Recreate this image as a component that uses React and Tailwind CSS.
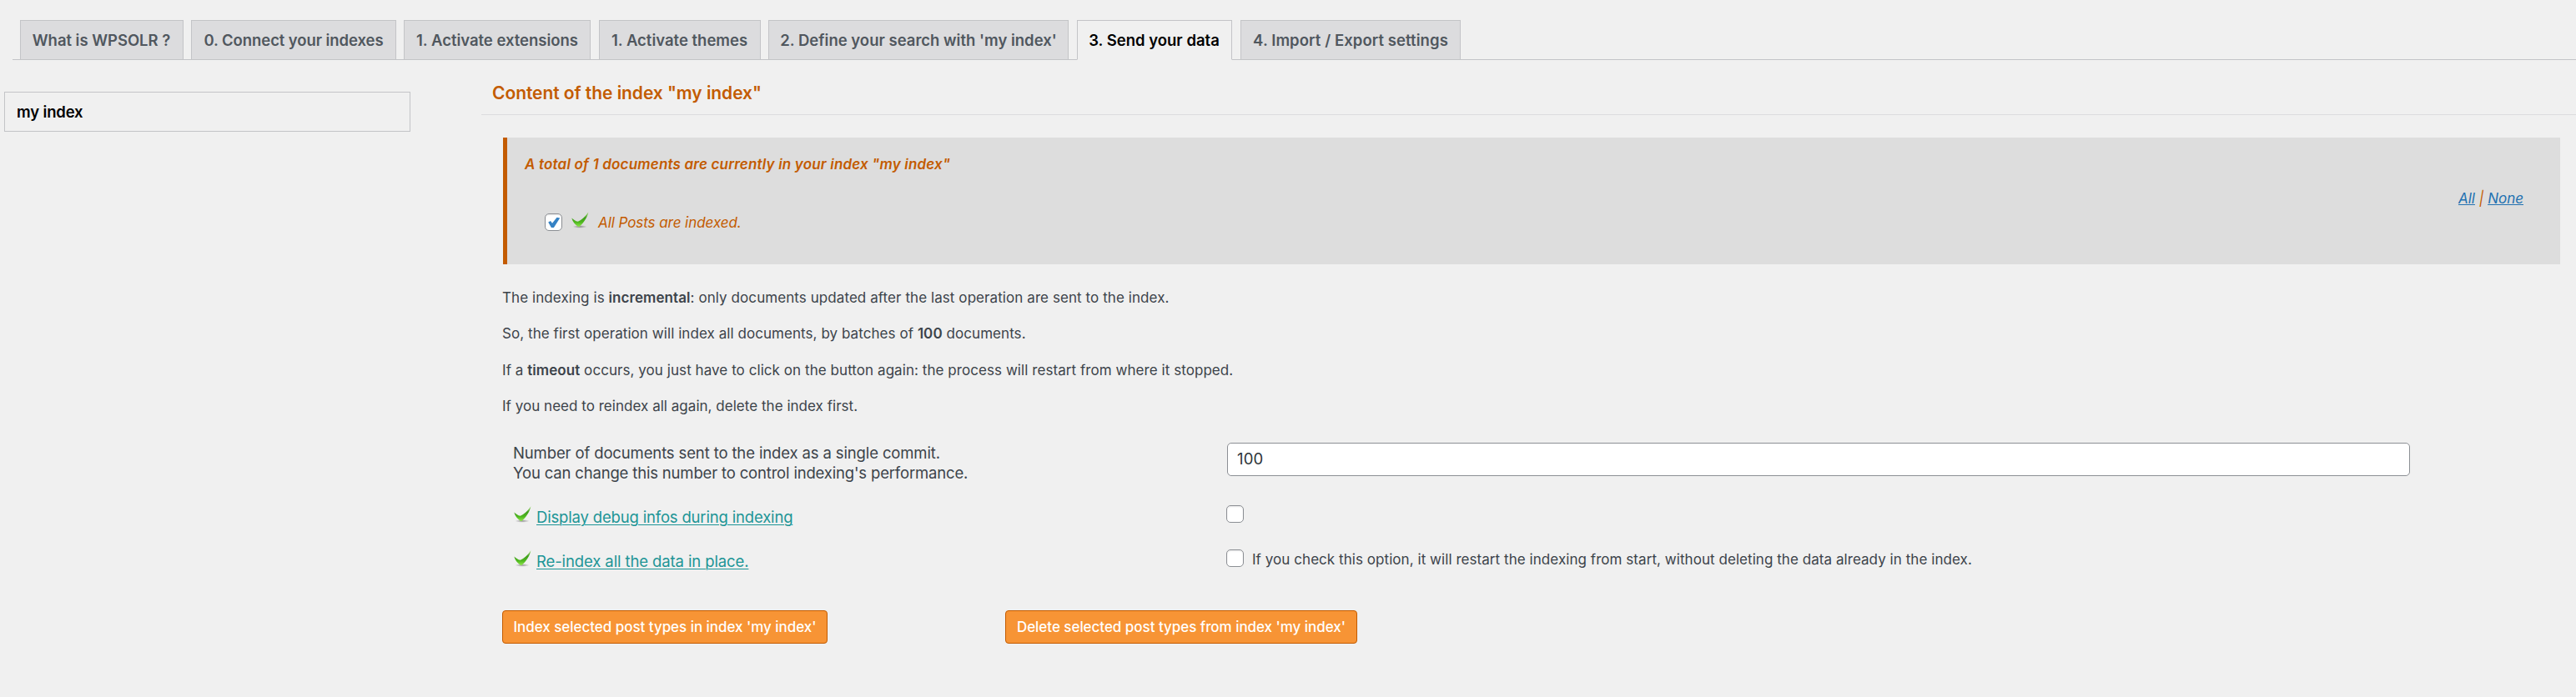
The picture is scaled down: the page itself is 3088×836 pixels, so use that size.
import { useId } from "react";

const TABS = [
  { label: "What is WPSOLR ?", box: "w-[196px] pr-[1px] tracking-[-0.03px]" },
  { label: "0. Connect your indexes", box: "w-[246px] ml-[9px] tracking-[-0.08px]" },
  { label: "1. Activate extensions", box: "w-[224px] ml-[9px] tracking-[-0.017px]" },
  { label: "1. Activate themes", box: "w-[194px] ml-[10px] pr-[1px]" },
  { label: "2. Define your search with 'my index'", box: "w-[360px] ml-[9px]" },
  { label: "3. Send your data", box: "w-[186px] ml-[10px] pr-[1px]", active: true },
  { label: "4. Import / Export settings", box: "w-[264px] ml-[10px] tracking-[0.069px]" },
];

function Tab({ label, box, active }) {
  const look = active
    ? "border-b border-b-[#f0f0f0] bg-[#f0f0f0] text-black -mb-px h-12"
    : "bg-[#dcdcde] text-[#50575e] h-[47px]";
  return (
    <a
      className={`block shrink-0 border-x border-t border-x-[#c3c4c7] border-t-[#c3c4c7] text-center text-[18.5px] leading-[46px] font-semibold whitespace-nowrap ${box} ${look}`}
    >
      {label}
    </a>
  );
}

function GreenTick() {
  const id = useId();
  return (
    <svg width="21" height="20" viewBox="0 0 21 20" className="shrink-0" aria-hidden="true">
      <defs>
        <linearGradient id={id} x1="0" y1="0" x2="0" y2="1">
          <stop offset="0" stopColor="#a5dc78" />
          <stop offset="0.4" stopColor="#3f9f1c" />
          <stop offset="0.7" stopColor="#4fb91f" />
          <stop offset="1" stopColor="#93e650" />
        </linearGradient>
        <radialGradient id={`${id}s`}>
          <stop offset="0" stopColor="#000" stopOpacity="0.4" />
          <stop offset="1" stopColor="#000" stopOpacity="0" />
        </radialGradient>
      </defs>
      <ellipse cx="10" cy="17.9" rx="8.5" ry="1.9" fill={`url(#${id}s)`} />
      <path
        d="M0.3 7.4 C2.2 9.2 4.8 11 7.8 11.8 C12 9.8 16.6 6 20.4 0.2 C19.2 6.4 15 13 9.6 17.8 C8.9 18.3 8 18.2 7.5 17.6 C4.6 15.2 1.4 12 0.3 7.4 Z"
        fill={`url(#${id})`}
      />
    </svg>
  );
}

function Checkbox({ checked }) {
  return (
    <span
      role="checkbox"
      aria-checked={!!checked}
      className="flex size-[21px] shrink-0 items-center justify-center rounded-[5px] border border-[#8c8f94] bg-white shadow-[inset_0_1px_2px_rgba(0,0,0,0.1)]"
    >
      {checked && (
        <svg width="19" height="19" viewBox="0 0 19 19" aria-hidden="true">
          <path d="M3.2 9.6 L6 8 L8 10.7 L13.6 3.8 L17.2 4.4 L9.9 16 L6.9 16.1 Z" fill="#3582c4" />
        </svg>
      )}
    </span>
  );
}

function OptionLabel({ className, children }) {
  return (
    <div className="flex w-[854px] items-start">
      <div className="mt-[1px]">
        <GreenTick />
      </div>
      <a
        className={`mt-[4px] ml-[6px] text-[18.5px] leading-[21px] text-[#1d9596] underline decoration-1 underline-offset-2 ${className}`}
      >
        {children}
      </a>
    </div>
  );
}

export default function App() {
  return (
    <div className="h-[836px] w-[3088px] overflow-hidden bg-[#f0f0f0] font-['Inter',sans-serif] text-[17px] text-[#3c434a]">
      <nav className="ml-[15px] pt-6">
        <div className="flex h-12 border-b border-[#c3c4c7] pl-[9px]">
          {TABS.map((t) => (
            <Tab key={t.label} {...t} />
          ))}
        </div>
      </nav>

      <div className="flex items-start">
        <aside className="mt-[38px] ml-[5px] h-12 w-[487px] border border-[#c3c4c7] pl-[14px] text-[18.5px] leading-[46px] font-semibold tracking-[-0.15px] text-black">
          my index
        </aside>

        <main className="ml-[85px] flex-1 pt-[14px]">
          <h2 className="h-[52px] border-b border-[#dcdcde] pl-[13px] text-[21px] leading-[51px] font-semibold tracking-[-0.06px] text-[#c35b00]">
            Content of the index "my index"
          </h2>

          <section className="mt-[27px] ml-[26px] flex h-[152px] w-[2466px] items-start justify-between border-l-[5px] border-[#c35b00] bg-[#dddddd] pl-[21px] leading-6 text-[#c35b00] italic">
            <div className="pt-5">
              <p className="font-semibold tracking-[0.18px]">
                A total of 1 documents are currently in your index "my index"
              </p>
              <div className="mt-[46px] ml-6 flex h-6 items-start">
                <div className="mt-[1px]">
                  <Checkbox checked />
                </div>
                <div className="-mt-[1px] ml-[11px]">
                  <GreenTick />
                </div>
                <span className="ml-[11px] tracking-[-0.06px]">All Posts are indexed.</span>
              </div>
            </div>
            <div className="mt-[61px] mr-[44px]">
              <a className="text-[#2271b1] underline decoration-1 underline-offset-1">All</a>
              {" | "}
              <a className="text-[#2271b1] underline decoration-1 underline-offset-1">None</a>
            </div>
          </section>

          <div className="mt-[19px] ml-[25px] h-[172px] leading-[43.4px] tracking-[0.06px]">
            <p className="tracking-[0.075px]">
              The indexing is <b className="font-semibold">incremental</b>: only documents updated after the last
              operation are sent to the index.
            </p>
            <p>
              So, the first operation will index all documents, by batches of <b className="font-semibold">100</b>{" "}
              documents.
            </p>
            <p>
              If a <b className="font-semibold">timeout</b> occurs, you just have to click on the button again: the
              process will restart from where it stopped.
            </p>
            <p className="tracking-[0.027px]">If you need to reindex all again, delete the index first.</p>
          </div>

          <div className="mt-[23px] ml-[38px]">
            <div className="flex h-12">
              <div className="w-[856px] text-[18.5px] leading-6">
                <p className="tracking-[-0.131px]">Number of documents sent to the index as a single commit.</p>
                <p className="tracking-[-0.17px]">You can change this number to control indexing's performance.</p>
              </div>
              <div className="h-10 w-[1418px] rounded-[5px] border border-[#8c8f94] bg-white pl-[11px] text-[18.5px] leading-[37px] tracking-[0.2px] text-[#2c3338]">
                100
              </div>
            </div>

            <div className="mt-[27px] ml-[1px] flex h-[21px] items-start">
              <OptionLabel className="tracking-[-0.17px]">Display debug infos during indexing</OptionLabel>
              <Checkbox />
            </div>

            <div className="mt-8 ml-[1px] flex h-[21px] items-start">
              <OptionLabel className="tracking-[-0.11px]">Re-index all the data in place.</OptionLabel>
              <Checkbox />
              <span className="mt-[2px] ml-[10px] leading-[21px] tracking-[0.054px]">
                If you check this option, it will restart the indexing from start, without deleting the data already in
                the index.
              </span>
            </div>
          </div>

          <div className="mt-[52px] ml-[25px] flex gap-[213px] leading-[38px] font-medium text-white">
            <button className="h-10 w-[390px] rounded-[4px] border border-[#c35b00] bg-[#f79435] tracking-[-0.04px]">
              Index selected post types in index 'my index'
            </button>
            <button className="h-10 w-[422px] rounded-[4px] border border-[#c35b00] bg-[#f79435] tracking-[-0.04px]">
              Delete selected post types from index 'my index'
            </button>
          </div>
        </main>
      </div>
    </div>
  );
}
